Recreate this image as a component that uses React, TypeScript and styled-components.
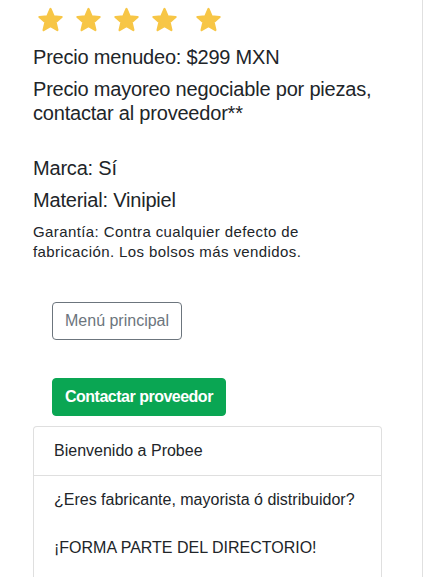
import React from "react";
import styled, { createGlobalStyle } from "styled-components";

const GlobalStyle = createGlobalStyle`
  html, body {
    margin: 0;
    padding: 0;
    background: #ffffff;
  }
  body {
    font-family: "Liberation Sans", Helvetica, Arial, sans-serif;
    color: #212529;
    font-size: 16px;
    line-height: 24px;
  }
  * { box-sizing: border-box; }
`;

const Page = styled.div`
  width: 423px;
  min-height: 577px;
  border-right: 1px solid #e0e0e0;
  padding: 7px 40px 0 33px;
  overflow: hidden;
`;

const StarRow = styled.div`
  display: flex;
  align-items: center;
  gap: 11px;
  height: 26px;
  padding-left: 4px;
  margin-bottom: 12px;
`;

const StarIcon = styled.svg<{ $extra?: number }>`
  width: 27px;
  height: 26px;
  flex: none;
  margin-left: ${(p) => p.$extra ?? 0}px;
`;

const Title = styled.h5<{ $spaced?: boolean }>`
  font-size: 20px;
  line-height: 24px;
  font-weight: 400;
  margin: ${(p) => (p.$spaced ? "31px" : "0")} 0 8px 0;
  letter-spacing: -0.2px;
`;

const Note = styled.p`
  font-size: 15px;
  line-height: 20px;
  letter-spacing: 0.4px;
  margin: 10px 0 0 0;
  max-width: 310px;
`;

const ButtonStack = styled.div`
  display: flex;
  flex-direction: column;
  align-items: flex-start;
  gap: 38px;
  padding-left: 19px;
  margin-top: 40px;
`;

const Button = styled.button<{ $variant: "outline" | "success" }>`
  font-family: inherit;
  font-size: 16px;
  line-height: 24px;
  padding: 6px 12px;
  border-radius: 4px;
  cursor: pointer;
  border: 1px solid ${(p) => (p.$variant === "success" ? "#0aa653" : "#6c757d")};
  background: ${(p) => (p.$variant === "success" ? "#0aa653" : "#ffffff")};
  color: ${(p) => (p.$variant === "success" ? "#ffffff" : "#6c757d")};
  font-weight: ${(p) => (p.$variant === "success" ? 700 : 400)};
  letter-spacing: ${(p) => (p.$variant === "success" ? "-0.5px" : "0")};
`;

const Card = styled.div`
  margin-top: 10px;
  border: 1px solid rgba(0, 0, 0, 0.125);
  border-radius: 4px;
  background: #ffffff;
`;

const CardHeader = styled.div`
  padding: 12px 20px;
  border-bottom: 1px solid rgba(0, 0, 0, 0.125);
  font-size: 16px;
  line-height: 24px;
`;

const CardBody = styled.div`
  padding: 12px 20px;
`;

const CardText = styled.p`
  margin: 0 0 24px 0;
  font-size: 16px;
  line-height: 24px;
`;

const Star: React.FC<{ extra?: number }> = ({ extra }) => (
  <StarIcon $extra={extra} viewBox="0 0 27 26" aria-hidden="true">
    <path
      d="M13.5 2 L16.6 9.3 L24.6 10 L18.6 15.3 L20.4 23.1 L13.5 19 L6.6 23.1 L8.4 15.3 L2.4 10 L10.4 9.3 Z"
      fill="#f7c646"
      stroke="#f7c646"
      strokeWidth="2.2"
      strokeLinejoin="round"
    />
  </StarIcon>
);

export default function App() {
  return (
    <>
      <GlobalStyle />
      <Page>
        <StarRow>
          <Star />
          <Star />
          <Star />
          <Star />
          <Star extra={6} />
        </StarRow>
        <Title>Precio menudeo: $299 MXN</Title>
        <Title>Precio mayoreo negociable por piezas, contactar al proveedor**</Title>
        <Title $spaced>Marca: Sí</Title>
        <Title>Material: Vinipiel</Title>
        <Note>Garantía: Contra cualquier defecto de fabricación. Los bolsos más vendidos.</Note>
        <ButtonStack>
          <Button $variant="outline">Menú principal</Button>
          <Button $variant="success">Contactar proveedor</Button>
        </ButtonStack>
        <Card>
          <CardHeader>Bienvenido a Probee</CardHeader>
          <CardBody>
            <CardText>¿Eres fabricante, mayorista ó distribuidor?</CardText>
            <CardText>¡FORMA PARTE DEL DIRECTORIO!</CardText>
          </CardBody>
        </Card>
      </Page>
    </>
  );
}
